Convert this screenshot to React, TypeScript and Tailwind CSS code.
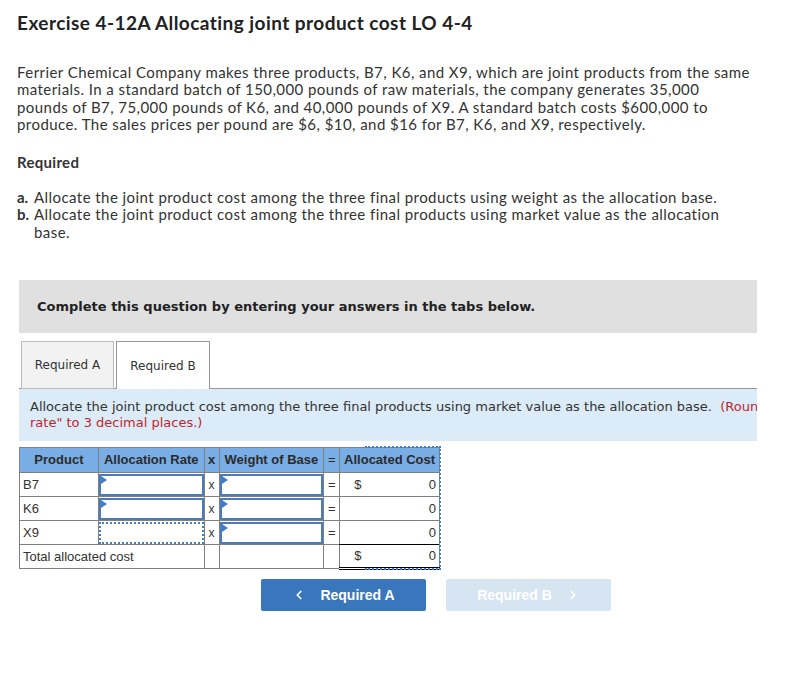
import React from 'react';
import { ChevronLeft, ChevronRight } from 'lucide-react';

const body = { fontFamily: 'Lato, "Open Sans", sans-serif' };
const verdana = { fontFamily: '"DejaVu Sans", Verdana, sans-serif' };
const arial = { fontFamily: '"Liberation Sans", Arial, sans-serif' };

function Triangle() {
  return (
    <svg className="absolute left-0 top-0" width="6" height="8" viewBox="0 0 6 8">
      <polygon points="0,0 6,4 0,8" fill="#3f7fcb" />
    </svg>
  );
}

function InputBox({ dotted = false }: { dotted?: boolean }) {
  return (
    <div
      className={`relative h-[22px] w-full bg-white ${
        dotted ? 'border-2 border-dotted border-[#3f7fcb]' : 'border-2 border-[#4a7cb9]'
      }`}
    >
      {!dotted && <Triangle />}
    </div>
  );
}

const rows = [
  { name: 'B7', dollar: true, dotted: false },
  { name: 'K6', dollar: false, dotted: false },
  { name: 'X9', dollar: false, dotted: true },
];

function CostTable() {
  const cell = 'border border-[#808080] p-0';
  return (
    <div className="relative mt-[6px] w-[421px]">
      <table className="border-collapse text-[13px] text-[#333]" style={arial}>
        <colgroup>
          <col className="w-[79px]" />
          <col className="w-[106px]" />
          <col className="w-[15px]" />
          <col className="w-[105px]" />
          <col className="w-[16px]" />
          <col className="w-[100px]" />
        </colgroup>
        <thead>
          <tr className="h-[25px] bg-[#78ade6] text-[13px] font-bold text-[#2b2b2b]">
            <th className={`${cell} text-center font-bold`}>Product</th>
            <th className={`${cell} text-center font-bold`}>Allocation Rate</th>
            <th className={`${cell} text-center font-bold`}>x</th>
            <th className={`${cell} text-center font-bold`}>Weight of Base</th>
            <th className={`${cell} text-center font-normal`}>=</th>
            <th className={`${cell} text-center font-bold`}>Allocated Cost</th>
          </tr>
        </thead>
        <tbody>
          {rows.map((r) => (
            <tr key={r.name} className="h-[24px]">
              <td className={`${cell} pl-[3px]`}>{r.name}</td>
              <td className={cell}>
                <InputBox dotted={r.dotted} />
              </td>
              <td className={`${cell} text-center text-[12px]`}>x</td>
              <td className={cell}>
                <InputBox />
              </td>
              <td className={`${cell} text-center`}>=</td>
              <td className={cell}>
                <div className="flex justify-between pl-[14px] pr-[3px]">
                  <span>{r.dollar ? '$' : ''}</span>
                  <span>0</span>
                </div>
              </td>
            </tr>
          ))}
          <tr className="h-[24px]">
            <td colSpan={2} className={`${cell} pl-[3px]`}>
              Total allocated cost
            </td>
            <td className={cell}></td>
            <td className={cell}></td>
            <td className={cell}></td>
            <td className={`${cell} border-b-[3px] border-b-black border-double border-t-black`}>
              <div className="flex justify-between pl-[14px] pr-[3px]">
                <span>$</span>
                <span>0</span>
              </div>
            </td>
          </tr>
        </tbody>
      </table>
      <div className="pointer-events-none absolute left-[346px] top-[-1px] h-[124px] w-[76px] border-y-2 border-r-2 border-dotted border-[#3f7fcb]" />
    </div>
  );
}

export default function App() {
  return (
    <div className="min-h-[700px] w-[789px] bg-white pl-[17px] text-[#333]" style={body}>
      <h1 className="pt-[10px] text-[19px] font-bold leading-[26px] tracking-[0.45px] text-[#222]">
        Exercise 4-12A Allocating joint product cost LO 4-4
      </h1>

      <div className="mt-[28px] whitespace-nowrap text-[15px] leading-[17.4px] tracking-[0.44px]">
        <div>Ferrier Chemical Company makes three products, B7, K6, and X9, which are joint products from the same</div>
        <div>materials. In a standard batch of 150,000 pounds of raw materials, the company generates 35,000</div>
        <div>pounds of B7, 75,000 pounds of K6, and 40,000 pounds of X9. A standard batch costs $600,000 to</div>
        <div>produce. The sales prices per pound are $6, $10, and $16 for B7, K6, and X9, respectively.</div>
      </div>

      <h2 className="mt-[19px] text-[15px] font-bold leading-[18px] tracking-[0.3px]">Required</h2>

      <ol className="mt-[18px] whitespace-nowrap text-[15px] leading-[17.5px] tracking-[0.44px]">
        <li className="flex">
          <span className="w-[17px] shrink-0 font-bold tracking-normal">a.</span>
          <span>Allocate the joint product cost among the three final products using weight as the allocation base.</span>
        </li>
        <li className="flex">
          <span className="w-[17px] shrink-0 font-bold tracking-normal">b.</span>
          <span>
            Allocate the joint product cost among the three final products using market value as the allocation
            <br />
            base.
          </span>
        </li>
      </ol>

      <div className="ml-[2px] w-[738px]">
        <div className="mt-[39px] flex h-[53px] items-center bg-[#e0e0e0] pl-[18px]">
          <span className="text-[13px] font-bold text-[#222]" style={verdana}>
            Complete this question by entering your answers in the tabs below.
          </span>
        </div>

        <div className="mt-[8px] flex h-[48px] items-end border-b border-[#999] pl-[2px]" style={verdana}>
          <div className="-mb-px flex h-[48px] w-[93px] items-center justify-center border border-[#bdbdbd] bg-[#f2f2f2] text-[12px] text-[#333]">
            Required A
          </div>
          <div className="-mb-px ml-[2px] flex h-[48px] w-[94px] items-center justify-center border border-b-0 border-[#999] bg-white text-[12px] text-[#333]">
            Required B
          </div>
        </div>

        <div className="h-[52px] overflow-hidden bg-[#dbebf8] pl-[11px] pt-[10px] text-[13px] leading-[16px]" style={verdana}>
          <div className="w-[760px] whitespace-nowrap">
            Allocate the joint product cost among the three final products using market value as the allocation base.{'\u00a0\u00a0'}
            <span className="text-[#c0272d]">(Round your "Allocation</span>
          </div>
          <div className="whitespace-nowrap text-[#c0272d]">rate" to 3 decimal places.)</div>
        </div>

        <CostTable />

        <div className="mt-[9px] flex gap-[20px] pl-[242px]" style={arial}>
          <button className="flex h-[32px] w-[165px] items-center justify-center gap-[14px] rounded-[2px] bg-[#3a76bb] text-[14px] font-bold text-white">
            <ChevronLeft size={14} strokeWidth={3} />
            <span>Required A</span>
          </button>
          <button className="flex h-[32px] w-[165px] items-center justify-center gap-[14px] rounded-[2px] bg-[#d7e4f1] text-[14px] font-bold text-white">
            <span>Required B</span>
            <ChevronRight size={14} strokeWidth={3} />
          </button>
        </div>
      </div>
    </div>
  );
}
